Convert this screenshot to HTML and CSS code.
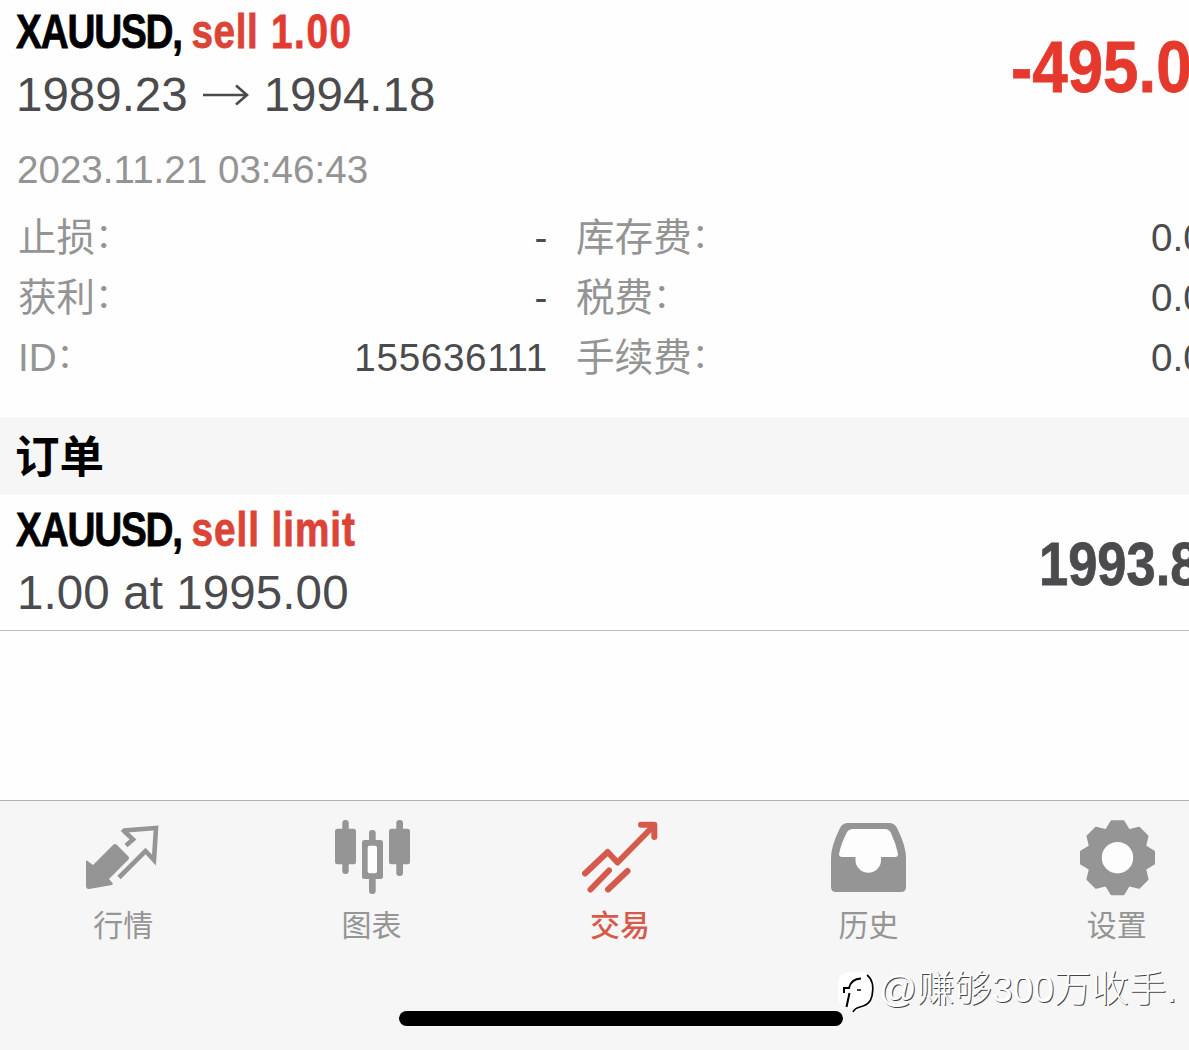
FILE: index.html
```
<!DOCTYPE html>
<html lang="zh-CN">

<head>
  <meta charset="UTF-8">
  <title>交易</title>
  <link rel="stylesheet" href="styles.css">
</head>

<body>
  <div class="pantalla">
    <!-- Open position -->
    <div class="position">
      <div class="summary">
        <div class="info">
          <div class="symbol">XAUUSD, <span class="sell">sell</span> <span class="volume">1.00</span></div>
          <div class="price">
            <span>1989.23</span>
            <svg class="arrow" width="48" height="24" viewBox="0 0 48 24"><path d="M1 12H45M34 2.500L45 12L34 21.500" /></svg>
            <span>1994.18</span>
          </div>
        </div>
        <div class="profit">-495.0</div>
      </div>
      <div class="date">2023.11.21 03:46:43</div>
      <div class="details">
        <span class="label">止损<i>：</i></span><span class="value">-</span>
        <span class="label">库存费<i>：</i></span><span class="amount">0.0</span>
        <span class="label">获利<i>：</i></span><span class="value">-</span>
        <span class="label">税费<i>：</i></span><span class="amount">0.0</span>
        <span class="label">ID<i>：</i></span><span class="value">155636111</span>
        <span class="label">手续费<i>：</i></span><span class="amount">0.0</span>
      </div>
    </div>

    <h2 class="section">订单</h2>

    <!-- Pending order -->
    <div class="order">
      <div class="info">
        <div class="symbol">XAUUSD, <span class="sell limit">sell limit</span></div>
        <div class="price">1.00 at 1995.00</div>
      </div>
      <div class="current">1993.8</div>
    </div>

    <div class="empty"></div>

    <div class="tabbar">
      <div class="tab">
        <svg class="icon" viewBox="0 0 76 76">
          <path d="M1 41Q1 39.500 2.500 41L8 45L28 25Q30 23 32 25L43 36Q45 38 43 40L24 59L28 63.500L27 65L4 69Q1 69 1 66Z" />
          <path class="line" d="M41 25.500L48 19.500L39 11L39.500 10.500L71 8L69 40L60.500 31L34 57.500" />
        </svg>
        <span>行情</span>
      </div>
      <div class="tab">
        <svg class="icon" viewBox="0 0 76 76">
          <rect x="8.300" y="0" width="6.400" height="54" rx="3" />
          <rect x="1" y="8.700" width="21" height="35.500" rx="2.500" />
          <rect x="35" y="10" width="6.700" height="64" rx="3" />
          <rect x="28" y="20" width="21" height="39" rx="2.500" />
          <rect class="hole" x="33.700" y="25.700" width="9.300" height="27.500" rx="2" />
          <rect x="62.300" y="0" width="6.700" height="56" rx="3" />
          <rect x="55" y="8.700" width="21" height="35.500" rx="2.500" />
        </svg>
        <span>图表</span>
      </div>
      <div class="tab active">
        <svg class="icon" viewBox="0 0 76 76">
          <path class="trend" d="M3 53.500L25.700 32L35.500 42.500L70 7.500" />
          <path class="trend" d="M59 4.800H72.300V17M68 5.500L71.500 9" />
          <path class="trend" d="M27 50.500L8.500 69.500M45.500 51L26 69.500" />
        </svg>
        <span>交易</span>
      </div>
      <div class="tab">
        <svg class="icon" viewBox="0 0 76 76">
          <path d="M18 3H59Q64.500 3 67 8Q76 26 76 38V67Q76 72 71 72H6Q1 72 1 67V38Q1 26 10 8Q12.500 3 18 3Z" />
          <path class="hole" d="M23 9H55Q59 9 61 13Q66 24 68 34Q68 37 65 37H51V40A12.700 12.700 0 0 1 25.500 40V37H12Q9 37 9 34Q11 24 16.500 13Q18.500 9 23 9Z" />
        </svg>
        <span>历史</span>
      </div>
      <div class="tab">
        <svg class="icon" viewBox="0 0 76 76">
          <g class="gear" transform="translate(38.500 37.700)">
            <path d="M-11.500 -27.500L-6 -36.500H6L11.500 -27.500V27.500L6 36.500H-6L-11.500 27.500Z" />
            <path transform="rotate(45)" d="M-11.500 -27.500L-6 -36.500H6L11.500 -27.500V27.500L6 36.500H-6L-11.500 27.500Z" />
            <path transform="rotate(90)" d="M-11.500 -27.500L-6 -36.500H6L11.500 -27.500V27.500L6 36.500H-6L-11.500 27.500Z" />
            <path transform="rotate(135)" d="M-11.500 -27.500L-6 -36.500H6L11.500 -27.500V27.500L6 36.500H-6L-11.500 27.500Z" />
          </g>
          <circle class="hole" cx="38.500" cy="37.700" r="15.700" />
        </svg>
        <span>设置</span>
      </div>
    </div>

    <div class="home-bar"></div>

    <div class="watermark">
      <svg width="40" height="44" viewBox="0 0 40 44">
        <path class="badge" d="M13 1H25Q37 1 37 14V24Q37 36 24 37L19 41V37H13Q1 37 1 25V13Q1 1 13 1Z" />
        <path class="stroke" d="M9.500 36L12.500 22M7 22V17H12Q14 8 24 7.500" />
        <path class="stroke thin" d="M20 19H24M30 4Q38 10 35 25Q33 34 23 36Q18 37 16 41" />
      </svg>
      <span>@赚够300万收手.</span>
    </div>
  </div>
</body>

</html>
```

FILE: styles.css
```
body {
  margin: 0;
  background-color: #fefefe;
  font-family: "Liberation Sans", "Noto Sans CJK SC", sans-serif;
  color: #4b4b4e;
}

.pantalla {
  position: relative;
  display: flex;
  flex-direction: column;
  width: 1189px;
  height: 1050px;
  overflow: hidden;
}

.position {
  height: 417px;
}

.summary {
  display: flex;
  justify-content: space-between;
  height: 142px;
}

.symbol {
  height: 64px;
  padding-left: 16px;
  font-size: 49px;
  font-weight: bold;
  line-height: 62px;
  letter-spacing: -1.5px;
  color: #000;
  white-space: nowrap;
  transform: scaleX(0.79);
  transform-origin: 16px 0;
  -webkit-text-stroke: 0.8px currentColor;
}

.sell {
  color: #dc4437;
  letter-spacing: 0.7px;
}

.volume {
  margin-left: 4px;
  color: #e33b32;
  letter-spacing: 2px;
}

.limit {
  letter-spacing: 1.2px;
}

.price {
  display: flex;
  align-items: center;
  height: 61px;
  padding-left: 16px;
  font-size: 47.5px;
  white-space: pre;
}

.arrow {
  margin: 0 14px;
  fill: none;
  stroke: #4b4b4e;
  stroke-width: 2.6;
}

.profit,
.current {
  width: 178px;
  font-size: 72px;
  font-weight: bold;
  line-height: 134px;
  white-space: nowrap;
  color: #e5392d;
  transform: scaleX(0.885);
  transform-origin: 0 0;
  -webkit-text-stroke: 0.8px currentColor;
}

.date {
  height: 66px;
  padding-left: 17px;
  font-size: 38.6px;
  line-height: 55px;
  color: #949494;
}

.details {
  display: grid;
  grid-template-columns: 290px 240px 603px 60px;
  grid-auto-rows: 60px;
  padding-left: 18px;
  font-size: 38.6px;
  line-height: 60px;
  white-space: nowrap;
}

.label {
  color: #949494;
}

.label i {
  position: relative;
  top: -3px;
  font-size: 34px;
  font-style: normal;
}

.value {
  text-align: right;
  letter-spacing: 0.7px;
}

.value + .label {
  padding-left: 28px;
}

.section {
  height: 78px;
  margin: 0;
  padding-left: 15px;
  background-color: #f6f6f6;
  font-size: 44.5px;
  line-height: 82px;
  color: #000;
}

.order {
  display: flex;
  justify-content: space-between;
  height: 135px;
  border-bottom: 1px solid #bcbcbe;
}

.order .symbol {
  line-height: 68px;
}

.order .price {
  height: 66px;
  padding-left: 17px;
  letter-spacing: 0.1px;
}

.current {
  width: 150px;
  font-size: 61px;
  line-height: 138px;
  color: #4b4b4e;
  transform: scaleX(0.86);
}

.empty {
  flex: 1;
}

.tabbar {
  display: flex;
  width: 1242px;
  height: 249px;
  margin-left: -1px;
  border-top: 1px solid #b2b2b2;
  background-color: #f6f6f6;
}

.tab {
  display: flex;
  flex: 1;
  flex-direction: column;
  align-items: center;
  padding-top: 19px;
  font-size: 30px;
  line-height: 44px;
  color: #959595;
}

.tab span {
  margin-top: 8px;
}

.icon {
  width: 76px;
  height: 76px;
  fill: currentColor;
}

.icon .line {
  fill: none;
  stroke: currentColor;
  stroke-width: 4.6;
}

.icon .hole {
  fill: #fdfdfd;
}

.icon .trend {
  fill: none;
  stroke: currentColor;
  stroke-width: 6;
  stroke-linecap: round;
  stroke-linejoin: round;
}

.gear {
  stroke: currentColor;
  stroke-width: 2;
  stroke-linejoin: round;
}

.active {
  color: #d65a4c;
}

.active span {
  font-weight: 500;
}

.home-bar {
  position: absolute;
  left: 399px;
  top: 1011px;
  width: 444px;
  height: 15px;
  border-radius: 8px;
  background-color: #000;
}

/* User name laid over the tab bar */
.watermark {
  position: absolute;
  left: 837px;
  top: 967px;
  display: flex;
  gap: 2px;
  font-size: 37.4px;
  font-weight: 300;
  line-height: 44px;
  color: #fff;
  text-shadow: 1px 1px 0 #444;
  white-space: nowrap;
}

.watermark svg {
  margin-top: 4px;
}

.badge {
  fill: #fff;
}

.stroke {
  fill: none;
  stroke: #000;
  stroke-width: 2;
}

.thin {
  stroke-width: 1.6;
}
```
